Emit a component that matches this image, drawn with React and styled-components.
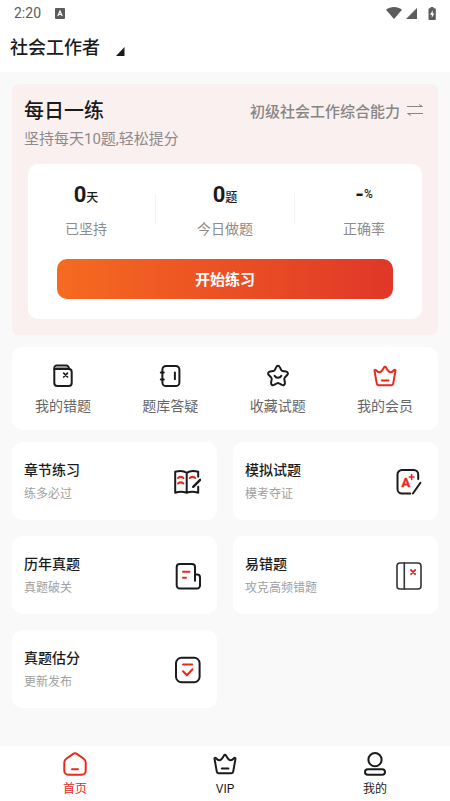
import React from "react";
import styled, { createGlobalStyle } from "styled-components";

const INK = "#1b1b1b";
const RED = "#e62a1c";

const GlobalStyle = createGlobalStyle`
  * {
    box-sizing: border-box;
  }

  body {
    margin: 0;
    background: #f9f9f9;
    color: ${INK};
    font-family: Roboto, "Noto Sans CJK SC", sans-serif;
  }

  button {
    margin: 0;
    padding: 0;
    border: 0;
    background: none;
    color: inherit;
    font: inherit;
    cursor: pointer;
  }

  a {
    color: inherit;
    text-decoration: none;
  }

  h1, h2, p {
    margin: 0;
  }

  svg {
    display: block;
    flex: none;
  }
`;

const Page = styled.div`
  display: flex;
  flex-direction: column;
  min-height: 100vh;
`;

const StatusBar = styled.div`
  display: flex;
  align-items: center;
  justify-content: space-between;
  height: 26px;
  padding: 0 14px;
  background: #fff;
  color: #5c5c5c;
  font-size: 14px;
`;

const StatusGroup = styled.div`
  display: flex;
  align-items: center;
  gap: ${props => props.$gap}px;
`;

const Header = styled.header`
  height: 46px;
  padding: 8px 10px;
  background: #fff;
`;

const SubjectButton = styled.button`
  display: flex;
  align-items: center;
  gap: 16px;
  font-size: 18px;
  font-weight: 500;
  line-height: 28px;
`;

const Main = styled.main`
  display: flex;
  flex: 1;
  flex-direction: column;
  gap: 12px;
  padding: 12px;
`;

const Daily = styled.section`
  padding: 12px 16px 16px;
  border-radius: 6px;
  background: #faf0ef;
`;

const DailyHead = styled.div`
  display: flex;
  align-items: center;
  justify-content: space-between;
  height: 28px;
  margin: 0 -1px 0 -4px;
`;

const DailyTitle = styled.h1`
  padding-top: 2px;
  font-size: 20px;
  font-weight: 500;
  line-height: 28px;
`;

const SwitchButton = styled.button`
  display: flex;
  align-items: center;
  gap: 7px;
  color: #868686;
  font-size: 15px;
  font-weight: 500;
`;

const DailyHint = styled.p`
  margin: 4px -4px 14px;
  color: #8e8a8a;
  font-size: 15px;
  line-height: 22px;
`;

const Panel = styled.div`
  padding: 15px 10px 20px;
  border-radius: 10px;
  background: #fff;
`;

const Stats = styled.div`
  display: flex;
  align-items: center;
  justify-content: space-between;
`;

const Divider = styled.span`
  width: 1px;
  height: 30px;
  background: #f3f3f3;
`;

const Stat = styled.div`
  width: 96px;
  text-align: center;
`;

const StatValue = styled.div`
  height: 32px;
  font-size: 22px;
  font-weight: 700;
  line-height: 32px;
`;

const Unit = styled.span`
  font-size: 12px;
  font-weight: 500;
  line-height: 1;
  vertical-align: ${props => (props.$raised ? "4px" : "baseline")};
`;

const StatLabel = styled.div`
  margin-top: 8px;
  color: #8c8c8c;
  font-size: 14px;
  line-height: 20px;
`;

const StartButton = styled.button`
  display: block;
  width: calc(100% - 38px);
  height: 40px;
  margin: 20px auto 0;
  padding-bottom: 2px;
  border-radius: 10px;
  background: linear-gradient(90deg, #f66a20, #e03728);
  color: #fff;
  font-size: 15px;
  font-weight: 700;
`;

const Shortcuts = styled.nav`
  display: flex;
  justify-content: space-between;
  padding: 17px 25px 14px 23px;
  border-radius: 10px;
  background: #fff;
`;

const Shortcut = styled.a`
  display: flex;
  flex-direction: column;
  align-items: center;
  gap: 8px;
  color: #666;
  font-size: 14px;
  line-height: 20px;
`;

const CardGrid = styled.section`
  display: grid;
  grid-template-columns: 1fr 1fr;
  gap: 16px;
`;

const Card = styled.a`
  display: flex;
  align-items: center;
  justify-content: space-between;
  height: 78px;
  padding: 2px 16px 0 12px;
  border-radius: 10px;
  background: #fff;
`;

const CardTitle = styled.h2`
  font-size: 14px;
  font-weight: 500;
  line-height: 24px;
`;

const CardHint = styled.p`
  color: #a0a0a0;
  font-size: 12px;
  line-height: 24px;
`;

const TabBar = styled.nav`
  position: sticky;
  bottom: 0;
  display: flex;
  height: 55px;
  padding-top: 6px;
  background: #fff;
`;

const Tab = styled.a`
  display: flex;
  flex: 1;
  flex-direction: column;
  align-items: center;
  gap: 5px;
  color: ${props => (props.$active ? RED : INK)};
  font-size: 12px;
  line-height: 16px;
`;

const Icon = ({ size = 24, width = 2, color = INK, children }) => (
  <svg
    width={size}
    height={size}
    viewBox={`0 0 ${size} ${size}`}
    fill="none"
    stroke={color}
    strokeWidth={width}
    strokeLinecap="round"
    strokeLinejoin="round"
    aria-hidden="true"
  >
    {children}
  </svg>
);

const MistakesIcon = () => (
  <Icon>
    <path d="M3.3 5.3V19a3 3 0 0 0 3 3h11.4a3 3 0 0 0 3-3V8a3 3 0 0 0-3-3H4.2" />
    <path d="M3.3 5.3V4a2.6 2.6 0 0 1 2.6-2.6h9.2c1.4 0 2.6 1.2 3.2 3.6" />
    <path d="M5.5 3.2h10" stroke="#9a9a9a" strokeWidth="1.4" />
    <path d="m12.7 9.2 3.8 3.8m0-3.8-3.8 3.8" strokeWidth="1.7" />
  </Icon>
);

const NotebookIcon = () => (
  <Icon>
    <rect x="4.4" y="2" width="17" height="20" rx="3.6" />
    <path d="M2.8 8.4h3M2.8 15.4h3M16.9 8.6v6.6" />
  </Icon>
);

const StarIcon = () => (
  <Icon>
    <path d="M10.2 3.1c.8-1.7 2.8-1.7 3.6 0l1.5 3c.3.6.7.9 1.4 1l3.2.5c2 .3 2.7 2 1.3 3.4l-2.4 2.5c-.4.5-.6 1-.5 1.6l.6 3.6c.3 2-1.2 3.1-3 2.2l-2.8-1.5c-.7-.4-1.5-.4-2.2 0l-2.8 1.5c-1.8.9-3.3-.2-3-2.2l.6-3.6c.1-.6-.1-1.1-.5-1.6L2.8 11c-1.4-1.4-.7-3.1 1.3-3.4l3.2-.5c.7-.1 1.1-.4 1.4-1z" />
    <path d="M8.6 11.8c1.3 2.6 5.5 2.6 6.8 0" />
  </Icon>
);

const CrownIcon = ({ color }) => (
  <Icon color={color}>
    <path d="m1.5 6.7 2.3 13c.1.9.8 1.5 1.7 1.5h13c.9 0 1.6-.6 1.7-1.5l2.3-13c.1-.8-.8-1.2-1.3-.7-1.2 1.3-2.6 2.4-4 2.2-1.5-.2-2.7-1.9-4.2-4.7-.5-.9-1.5-.9-2 0-1.5 2.8-2.7 4.5-4.2 4.7-1.4.2-2.8-.9-4-2.2-.5-.5-1.4-.1-1.3.7z" />
    <path d="M8.8 16.6h6.6" />
  </Icon>
);

const HomeIcon = () => (
  <Icon color={RED}>
    <path d="M1.3 10.6c0-1.7.7-2.9 2-3.8l6.5-4.7c1.4-1 3-1 4.4 0l6.5 4.7c1.3.9 2 2.1 2 3.8v8.2a4 4 0 0 1-4 4H5.3a4 4 0 0 1-4-4z" />
    <path d="M9 17.3h6" />
  </Icon>
);

const PersonIcon = () => (
  <Icon>
    <circle cx="12" cy="7.7" r="6.6" />
    <rect x="2" y="17.2" width="20" height="5.6" rx="2.8" />
  </Icon>
);

const OpenBookIcon = () => (
  <Icon size={28}>
    <path d="M13.7 4.8C10.5 2.6 6 2.6 2.2 3.8v21c3.8-1.3 8-1.3 11.5 0zM13.7 4.8c3.3-2.2 7.8-2.2 11.5-1v5M13.7 24.8c3.5-1.3 7.5-1.3 11.5 0v-6" />
    <path d="m20.2 18.8 6.9-7" strokeWidth="2.4" />
    <path d="M5 10c1.6-1.3 3.8-1.3 5.4 0M5 15.5c1.6-1.3 3.8-1.3 5.4 0M16.8 10c1.6-1.3 3.8-1.3 5.4 0" stroke={RED} />
  </Icon>
);

const GradeIcon = () => (
  <Icon size={28}>
    <path d="M24.2 11V6.5a4.5 4.5 0 0 0-4.5-4.5H8a4.5 4.5 0 0 0-4.5 4.5V21A4.5 4.5 0 0 0 8 25.5h8.2M26.4 14.7l-7.5 10.8" />
    <text x="7.5" y="18.8" fill={RED} stroke={RED} strokeWidth="0.4" fontSize="13" fontWeight="700">A</text>
    <path d="M17.6 6.7v4.6M15.3 9h4.6" stroke={RED} strokeWidth="1.7" />
  </Icon>
);

const PaperIcon = () => (
  <Icon size={28}>
    <path d="M22 18.8V5a3 3 0 0 0-3-3H6.7a3 3 0 0 0-3 3v18.5a3 3 0 0 0 3 3H24a3 3 0 0 0 3-3v-8.3a2.8 2.8 0 0 0-2.8-2.8h-1.7" />
    <path d="M10 9.7h6.5M10 15.7h3" stroke={RED} />
  </Icon>
);

const ErrorBookIcon = () => (
  <Icon size={28} width={1.6} color="#333">
    <rect x="3" y="1" width="24" height="26" rx="3" />
    <path d="M10.3 1v26" />
    <path d="m17 8 4.2 4.2m0-4.2L17 12.2" stroke={RED} strokeWidth="1.8" />
  </Icon>
);

const ScoreIcon = () => (
  <Icon size={28}>
    <rect x="3" y="1.8" width="23.6" height="24.4" rx="5.5" />
    <path d="M10 8.4h9.2M10 15.2l3.9 4 5.6-6" stroke={RED} />
  </Icon>
);

const SwapIcon = () => (
  <svg width="16" height="12" viewBox="0 0 16 12" fill="none" stroke="#868686" aria-hidden="true">
    <path d="M0 2.5h15.500L12 .5M16 9.500H.5L4 11.500" />
  </svg>
);

const shortcuts = [
  { label: "我的错题", icon: <MistakesIcon /> },
  { label: "题库答疑", icon: <NotebookIcon /> },
  { label: "收藏试题", icon: <StarIcon /> },
  { label: "我的会员", icon: <CrownIcon color={RED} /> }
];

const cards = [
  { title: "章节练习", hint: "练多必过", icon: <OpenBookIcon /> },
  { title: "模拟试题", hint: "模考夺证", icon: <GradeIcon /> },
  { title: "历年真题", hint: "真题破关", icon: <PaperIcon /> },
  { title: "易错题", hint: "攻克高频错题", icon: <ErrorBookIcon /> },
  { title: "真题估分", hint: "更新发布", icon: <ScoreIcon /> }
];

const tabs = [
  { label: "首页", icon: <HomeIcon />, active: true },
  { label: "VIP", icon: <CrownIcon /> },
  { label: "我的", icon: <PersonIcon /> }
];

const Status = () => (
  <StatusBar>
    <StatusGroup $gap={14}>
      <span>2:20</span>
      <svg width="10" height="11" viewBox="0 0 10 11" aria-hidden="true">
        <rect width="10" height="11" rx="1" fill="#5c5c5c" />
        <path d="M2.8 8 5 3l2.2 5M3.6 6.5h2.8" fill="none" stroke="#fff" strokeWidth="1.2" />
      </svg>
    </StatusGroup>
    <StatusGroup $gap={4}>
      <svg width="16" height="12" viewBox="0 0 16 12" fill="#5c5c5c" aria-hidden="true">
        <path d="M0 2.7C4.5-.9 11.5-.9 16 2.7L8 12z" />
      </svg>
      <svg width="11" height="11" viewBox="0 0 11 11" fill="#5c5c5c" aria-hidden="true">
        <path d="M11 0v11H0z" />
      </svg>
      <svg width="15" height="13" viewBox="0 0 15 13" fill="#5c5c5c" aria-hidden="true">
        <path d="M9.5 0h3v1.3H14q.8 0 .8.8v10.1q0 .8-.8.8H8.3q-.8 0-.8-.8V2.1q0-.8.8-.8h1.2z" />
        <path d="M11.7 3.3 9 7.8h1.800v3l2.500-4.300h-1.600z" fill="#fff" />
      </svg>
    </StatusGroup>
  </StatusBar>
);

const DailyPractice = () => (
  <Daily>
    <DailyHead>
      <DailyTitle>每日一练</DailyTitle>
      <SwitchButton type="button">
        初级社会工作综合能力
        <SwapIcon />
      </SwitchButton>
    </DailyHead>
    <DailyHint>坚持每天10题,轻松提分</DailyHint>
    <Panel>
      <Stats>
        <Stat>
          <StatValue>0<Unit>天</Unit></StatValue>
          <StatLabel>已坚持</StatLabel>
        </Stat>
        <Divider />
        <Stat>
          <StatValue>0<Unit>题</Unit></StatValue>
          <StatLabel>今日做题</StatLabel>
        </Stat>
        <Divider />
        <Stat>
          <StatValue>-<Unit $raised>%</Unit></StatValue>
          <StatLabel>正确率</StatLabel>
        </Stat>
      </Stats>
      <StartButton type="button">开始练习</StartButton>
    </Panel>
  </Daily>
);

const App = () => (
  <Page>
    <GlobalStyle />
    <Status />
    <Header>
      <SubjectButton type="button">
        社会工作者
        <svg width="9" height="15" viewBox="0 0 9 15" fill={INK} aria-hidden="true">
          <path d="M8.5 6v9H0z" />
        </svg>
      </SubjectButton>
    </Header>
    <Main>
      <DailyPractice />
      <Shortcuts>
        {shortcuts.map(({ label, icon }) => (
          <Shortcut key={label} href="#">
            {icon}
            {label}
          </Shortcut>
        ))}
      </Shortcuts>
      <CardGrid>
        {cards.map(({ title, hint, icon }) => (
          <Card key={title} href="#">
            <div>
              <CardTitle>{title}</CardTitle>
              <CardHint>{hint}</CardHint>
            </div>
            {icon}
          </Card>
        ))}
      </CardGrid>
    </Main>
    <TabBar>
      {tabs.map(({ label, icon, active }) => (
        <Tab key={label} href="#" $active={active}>
          {icon}
          {label}
        </Tab>
      ))}
    </TabBar>
  </Page>
);

export default App;
